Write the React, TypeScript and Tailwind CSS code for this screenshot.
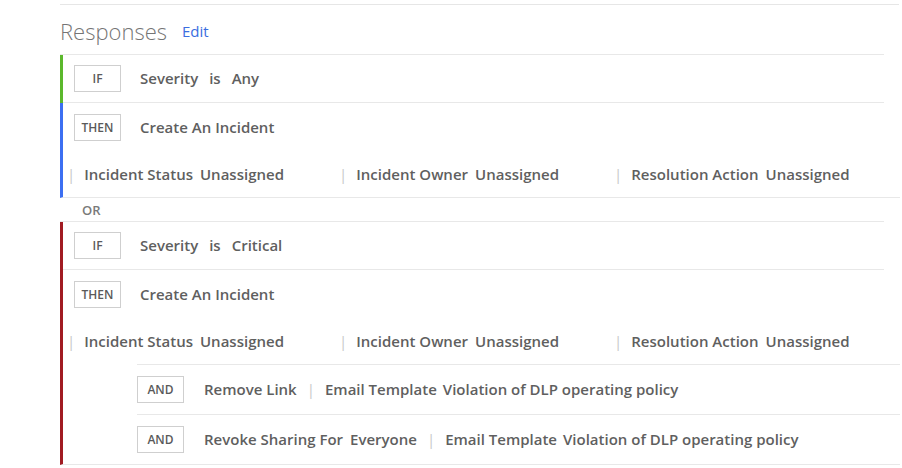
import React from 'react'

const Tag: React.FC<{ label: string }> = ({ label }) => (
  <div className="w-[47px] h-[27px] border border-[#cfcfcf] flex items-center justify-center text-[12px] font-semibold text-[#5a5a5a]">
    {label}
  </div>
)

const Sep: React.FC = () => <span className="text-[#c8c8c8] font-normal text-[15px]">|</span>

const Field: React.FC<{ label: string; value: string; width: string }> = ({ label, value, width }) => (
  <div className={`flex items-center ${width}`}>
    <Sep />
    <span className="ml-[9px]">{label}</span>
    <span className="ml-[7px]">{value}</span>
  </div>
)

const DetailRow: React.FC = () => (
  <div className="h-[47px] flex items-center pl-[4px] pt-[2px] text-[15px] font-semibold text-[#5f5f5f]">
    <Field label="Incident Status" value="Unassigned" width="w-[272px]" />
    <Field label="Incident Owner" value="Unassigned" width="w-[275px]" />
    <Field label="Resolution Action" value="Unassigned" width="w-[260px]" />
  </div>
)

const ConditionRow: React.FC<{ tag: string; children: React.ReactNode; border?: boolean }> = ({ tag, children, border }) => (
  <div className={`flex items-center pl-[11px] w-[821px] ${border ? 'border-b border-[#e8e8e8] h-[48px]' : 'h-[47px] pt-[2px]'}`}>
    <Tag label={tag} />
    <div className="ml-[19px] text-[15px] font-semibold text-[#5f5f5f] flex items-center gap-[11px]">{children}</div>
  </div>
)

const AndRow: React.FC<{ action: React.ReactNode; template: string }> = ({ action, template }) => (
  <div className="ml-[74px] border-t border-[#e8e8e8] h-[50px] flex items-center text-[15px] font-semibold text-[#5f5f5f]">
    <Tag label="AND" />
    <span className="ml-[20px]">{action}</span>
    <span className="mx-[10px]"><Sep /></span>
    <span>Email Template</span>
    <span className="ml-[6px]">{template}</span>
  </div>
)

export default function App() {
  return (
    <div
      className="w-[902px] h-[468px] bg-white pl-[60px] pt-[4px] overflow-hidden"
      style={{ fontFamily: '"Open Sans", "Noto Sans", sans-serif' }}
    >
      <div className="w-[839px] h-[1px] bg-[#e6e6e6]" />

      <div className="h-[49px] flex items-center pt-[4px]">
        <span className="text-[22px] font-light text-[#757575]">Responses</span>
        <span className="ml-[15px] text-[15px] text-[#3b6ee0]">Edit</span>
      </div>

      <div className="w-[824px] h-[1px] bg-[#e8e8e8]" />

      <div className="w-[840px]">
        <div className="border-l-[3px] border-[#5bb82c]">
          <ConditionRow tag="IF" border>
            <span>Severity</span>
            <span>is</span>
            <span>Any</span>
          </ConditionRow>
        </div>
        <div className="border-l-[3px] border-[#3c6ff2] border-b border-b-[#e8e8e8]">
          <ConditionRow tag="THEN">
            <span>Create An Incident</span>
          </ConditionRow>
          <DetailRow />
        </div>

        <div className="h-[24px] flex items-center pl-[22px] pt-[2px] text-[13px] font-semibold text-[#7a7a7a] w-[824px] border-b border-[#e8e8e8]">
          OR
        </div>

        <div className="border-l-[3px] border-[#a11b22] border-b border-b-[#e8e8e8]">
          <ConditionRow tag="IF" border>
            <span>Severity</span>
            <span>is</span>
            <span>Critical</span>
          </ConditionRow>
          <ConditionRow tag="THEN">
            <span>Create An Incident</span>
          </ConditionRow>
          <DetailRow />
          <AndRow action="Remove Link" template="Violation of DLP operating policy" />
          <AndRow
            action={<><span>Revoke Sharing For</span><span className="ml-[7px]">Everyone</span></>}
            template="Violation of DLP operating policy"
          />
        </div>
      </div>
    </div>
  )
}
